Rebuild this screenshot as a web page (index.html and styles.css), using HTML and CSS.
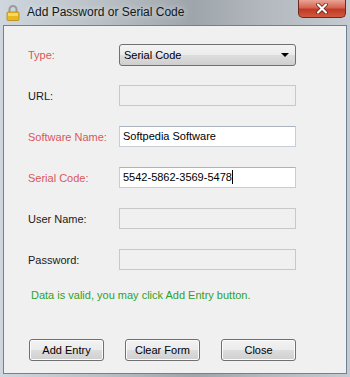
FILE: index.html
```html
<!DOCTYPE html>
<html>
    <head>
        <meta charset="utf-8" />
        <title>Add Password or Serial Code</title>
        <link rel="stylesheet" href="styles.css">
    </head>
    <body>
        <div class="window">
            <div class="titlebar">
                <svg class="lock" width="14" height="16" viewBox="0 0 14 16">
                    <path d="M3.5 7 V4.5 A3.5 3.5 0 0 1 10.5 4.5 V7" fill="none" stroke="#9a9a9a" stroke-width="2"/>
                    <rect x="1" y="7" width="12" height="8.5" rx="1" fill="#e8b820" stroke="#b68a10" stroke-width="0.8"/>
                    <rect x="2" y="8" width="10" height="3" fill="#f6d760"/>
                </svg>
                <span class="title">Add Password or Serial Code</span>
                <div class="close-btn">
                    <svg width="14" height="11" viewBox="0 0 14 11">
                        <path d="M3 1.5 L11 9.5 M11 1.5 L3 9.5" stroke="#5a1a14" stroke-width="3.6" stroke-linecap="round"/>
                        <path d="M3 1.5 L11 9.5 M11 1.5 L3 9.5" stroke="#ffffff" stroke-width="2.2" stroke-linecap="round"/>
                    </svg>
                </div>
            </div>
            <div class="client">
                <div class="form">
                    <label class="req">Type:</label>
                    <div class="select">
                        <span>Serial Code</span>
                        <span class="arrow"></span>
                    </div>

                    <label>URL:</label>
                    <div class="field disabled"></div>

                    <label class="req">Software Name:</label>
                    <div class="field">Softpedia Software</div>

                    <label class="req">Serial Code:</label>
                    <div class="field">5542-5862-3569-5478<span class="caret"></span></div>

                    <label>User Name:</label>
                    <div class="field disabled"></div>

                    <label>Password:</label>
                    <div class="field disabled"></div>
                </div>
                <p class="status">Data is valid, you may click Add Entry button.</p>
                <div class="buttons">
                    <button type="button">Add Entry</button>
                    <button type="button">Clear Form</button>
                    <button type="button">Close</button>
                </div>
            </div>
        </div>
    </body>
</html>
```

FILE: styles.css
```css
* {
	padding: 0;
	margin: 0;
	box-sizing: border-box;
}
body {
	width: 350px;
	height: 377px;
	overflow: hidden;
	background: #7f9cb8;
	font-family: "Liberation Sans", Arial, sans-serif;
	font-size: 11px;
}
.window {
	height: 377px;
	padding: 0 3px 3px 3px;
	background: linear-gradient(90deg, #cfd6dd 0%, #b8bfc5 30%, #9ea5ab 55%, #b2b8bd 75%, #c4cbd2 100%);
}
.titlebar {
	height: 25px;
	display: flex;
	align-items: center;
	position: relative;
}
.lock {
	margin: 0 7px 0 3px;
}
.title {
	font-size: 12px;
	color: #101820;
	margin-top: -2px;
	text-shadow: 0 0 6px rgba(255,255,255,0.8);
}
.close-btn {
	position: absolute;
	top: 0;
	right: 1px;
	width: 48px;
	height: 18px;
	border: 1px solid #6b2a22;
	border-top: 0;
	border-radius: 0 0 5px 5px;
	background: linear-gradient(#e9a497 0%, #d5644f 45%, #c13a25 55%, #cf5a3e 100%);
	display: flex;
	justify-content: center;
	align-items: center;
}
.client {
	height: 349px;
	background-color: #f0f0f0;
	border: 1px solid #6f8193;
	padding: 18px 0 0 24px;
}
.form {
	display: grid;
	grid-template-columns: 91px 177px;
	grid-auto-rows: 21px;
	row-gap: 20px;
	align-items: center;
}
.form label {
	color: #1a1a1a;
}
.form label.req {
	color: #d9575a;
}
.field {
	height: 21px;
	border: 1px solid #c5cdd6;
	border-top-color: #abb3bc;
	background: #ffffff;
	padding: 3px 0 0 3px;
	font-size: 11px;
	color: #000;
	display: flex;
}
.field.disabled {
	background: #f0f0f0;
	border-color: #c8c8c8;
}
.caret {
	display: inline-block;
	width: 1px;
	height: 14px;
	margin-top: -1px;
	background: #000;
}
.select {
	height: 22px;
	border: 1px solid #707070;
	border-radius: 3px;
	background: linear-gradient(#f4f4f4 0%, #ebebeb 50%, #dddddd 51%, #cfcfcf 100%);
	display: flex;
	justify-content: space-between;
	align-items: center;
	padding: 0 6px 0 4px;
	font-size: 11px;
	color: #000;
}
.arrow {
	width: 0;
	height: 0;
	border-left: 4px solid transparent;
	border-right: 4px solid transparent;
	border-top: 4px solid #000;
}
.status {
	margin: 19px 0 0 3px;
	color: #2ea22a;
}
.buttons {
	display: flex;
	gap: 21px;
	margin: 38px 0 0 1px;
}
.buttons button {
	width: 75px;
	height: 22px;
	border: 1px solid #707070;
	border-radius: 3px;
	background: linear-gradient(#f2f2f2 0%, #ebebeb 50%, #dddddd 51%, #cfcfcf 100%);
	font-family: "Liberation Sans", Arial, sans-serif;
	font-size: 11px;
	color: #000;
	box-shadow: inset 0 0 0 1px #fcfcfc;
}
```
